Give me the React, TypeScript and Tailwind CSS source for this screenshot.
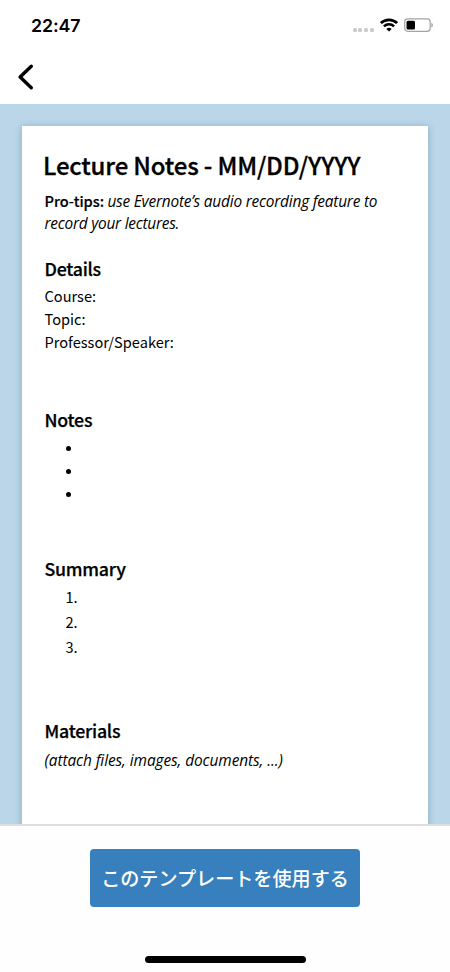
import React from "react";

function StatusBar() {
  return (
    <div className="flex h-[50px] shrink-0 items-center justify-between pr-[16.5px] pl-[31px]">
      <span className="mt-[2px] font-['Inter',sans-serif] text-[17.8px] leading-[22px] font-semibold tracking-[-0.1px]">22:47</span>
      <div className="flex h-[18px] items-center">
        <div className="mt-[10px] mr-[6px] flex gap-[1.6px]">
          {[0, 1, 2, 3].map((i) => (
            <i key={i} className="h-1 w-1 rounded-[1.5px] bg-[#cbcbcb]" />
          ))}
        </div>
        <svg className="mr-[6px]" width="18" height="14" viewBox="0 0 18 14" fill="none" stroke="#000">
          <path d="M.9 5.1C5.4.7 12.6.7 17.1 5.1" strokeWidth="2.7" />
          <path d="M3.9 8.4c2.9-2.8 7.3-2.8 10.2 0" strokeWidth="2.5" />
          <path d="M6.3 10.9c1.5-1.5 3.9-1.5 5.4 0L9 13.6z" fill="#000" stroke="none" />
        </svg>
        <svg width="30" height="14" viewBox="0 0 30 14">
          <rect x=".7" y=".9" width="25.5" height="12.4" rx="3" fill="none" stroke="#a3a3a3" strokeWidth="1.2" />
          <rect x="2.5" y="2.7" width="8.5" height="8.8" rx="1.5" fill="#000" />
          <path d="M27.4 4.8c2 .8 2 3.8 0 4.6z" fill="#a3a3a3" />
        </svg>
      </div>
    </div>
  );
}

function Heading({ children }: { children: React.ReactNode }) {
  return <h2 className="h-7 text-[17.8px] leading-7 font-medium tracking-[-0.25px] whitespace-nowrap [-webkit-text-stroke:0.25px_black]">{children}</h2>;
}

export default function App() {
  return (
    <div className="flex h-[972px] w-[450px] flex-col overflow-hidden bg-white font-['Noto_Sans_CJK_JP',sans-serif] text-black">
      <StatusBar />
      <header className="flex h-[54px] shrink-0 items-center pl-[16px]">
        <svg width="18" height="28" viewBox="0 0 18 28" fill="none" stroke="#000" strokeWidth="3.4" strokeLinecap="round" strokeLinejoin="round">
          <path d="M15.3 3.2 4.1 14l11.2 10.8" />
        </svg>
      </header>
      <main className="h-[720px] shrink-0 overflow-hidden bg-[#bad6e8] px-[22px] pt-[22px]">
        <article className="h-[760px] bg-white pt-[19px] pl-[22.5px] text-[14.6px] shadow-[0_1px_7px_rgba(50,90,120,0.35)]">
          <h1 className="-ml-[1.5px] h-10 text-[24px] leading-10 font-medium tracking-[-0.17px] whitespace-nowrap [-webkit-text-stroke:0.3px_black]">Lecture Notes - MM/DD/YYYY</h1>
          <div className="mt-[5px] h-[43px] whitespace-nowrap">
            <p className="h-[22px] leading-[22px]">
              <span className="font-medium [-webkit-text-stroke:0.2px_black]">Pro-tips:</span>{" "}
              <em className="font-['Open_Sans',sans-serif] text-[15.4px] tracking-[-0.2px]">use Evernote’s audio recording feature to</em>
            </p>
            <p className="h-[21px] font-['Open_Sans',sans-serif] text-[15.4px] leading-[23px] tracking-[-0.24px] italic">record your lectures.</p>
          </div>
          <div className="mt-[21px]"><Heading>Details</Heading></div>
          <div className="mt-[2px] h-[70px] leading-[23px]">
            <p>Course:</p>
            <p>Topic:</p>
            <p>Professor/Speaker:</p>
          </div>
          <div className="mt-[51px]"><Heading>Notes</Heading></div>
          <ul className="mt-[3.4px] pl-[21px]">
            {[0, 1, 2].map((i) => (
              <li key={i} className="flex h-[23.4px] items-center"><i className="h-[5px] w-[5px] rounded-full bg-black" /></li>
            ))}
          </ul>
          <div className="mt-[47.1px]"><Heading>Summary</Heading></div>
          <ol className="mt-[2px] pl-[21px] leading-[25.4px]">
            <li>1.</li>
            <li>2.</li>
            <li>3.</li>
          </ol>
          <div className="mt-[55.7px]"><Heading>Materials</Heading></div>
          <p className="mt-[5px] font-['Open_Sans',sans-serif] text-[15.4px] leading-6 tracking-[-0.08px] whitespace-nowrap italic">(attach files, images, documents, ...)</p>
        </article>
      </main>
      <footer className="flex flex-1 flex-col items-center border-t-2 border-[#dedede] bg-[#fefefe] pt-[23.4px]">
        <button className="h-[58px] w-[270px] rounded-[4px] bg-[#387fbd] text-[19.1px] leading-[56px] font-medium whitespace-nowrap text-white">このテンプレートを使用する</button>
        <div className="mt-[49px] h-[6.5px] w-[161px] rounded-full bg-black" />
      </footer>
    </div>
  );
}
